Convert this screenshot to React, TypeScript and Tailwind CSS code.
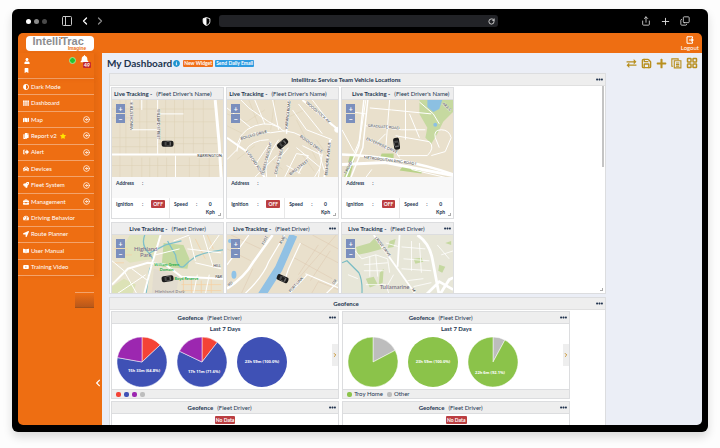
import type {ReactNode} from 'react';
import {ChevronLeft, ChevronRight, CircleArrowRight, Copy, LayoutGrid, PanelLeft, Plus, RotateCw, Save, Share} from 'lucide-react';
import {
  FaAdjust,
  FaBell,
  FaBookOpen,
  FaBookmark,
  FaBriefcase,
  FaCar,
  FaChevronLeft,
  FaCopy,
  FaEllipsisH,
  FaInfoCircle,
  FaLocationArrow,
  FaMap,
  FaPlus,
  FaRocket,
  FaSignOutAlt,
  FaStar,
  FaTachometerAlt,
  FaTh,
  FaUser,
  FaYoutube,
} from 'react-icons/fa';

const NAV = [
  {label: 'Dark Mode', icon: FaAdjust},
  {label: 'Dashboard', icon: FaTh},
  {label: 'Map', icon: FaMap, more: true},
  {label: 'Report v2', icon: FaCopy, more: true, star: true},
  {label: 'Alert', icon: FaSignOutAlt, more: true},
  {label: 'Devices', icon: FaCar, more: true},
  {label: 'Fleet System', icon: FaRocket, more: true},
  {label: 'Management', icon: FaBriefcase, more: true},
  {label: 'Driving Behavior', icon: FaTachometerAlt},
  {label: 'Route Planner', icon: FaLocationArrow},
  {label: 'User Manual', icon: FaBookOpen},
  {label: 'Training Video', icon: FaYoutube},
];

function BrowserBar() {
  return (
    <div className="flex h-6 shrink-0 items-center text-white">
      <div className="flex w-[184px] shrink-0 items-center pl-2">
        <span className="size-[5px] rounded-full bg-white" />
        <span className="ml-[3px] size-[5px] rounded-full bg-[#8a8a8a]" />
        <span className="ml-[3px] size-[5px] rounded-full bg-[#4a4a4a]" />
        <PanelLeft className="ml-[14px] size-3 text-[#c8c8c8]" strokeWidth={2} />
        <ChevronLeft className="ml-1.5 size-3" strokeWidth={2.5} />
        <ChevronRight className="ml-[3px] size-3 text-[#8a8a8a]" strokeWidth={2.5} />
      </div>
      <svg viewBox="0 0 16 16" className="mr-2 size-[9px] shrink-0">
        <path d="M8 1l6 2v5c0 4-3 6-6 7-3-1-6-3-6-7V3z" fill="none" stroke="white" strokeWidth="1.6" />
        <path d="M8 1L2 3v5c0 4 3 6 6 7z" fill="white" />
      </svg>
      <div className="flex h-3 flex-1 items-center justify-end rounded-[3px] bg-[#222327] pr-[3px]">
        <RotateCw className="size-[7px] text-[#e0e0e0]" strokeWidth={3} />
      </div>
      <div className="flex w-[204px] shrink-0 items-center justify-end gap-[9px] pr-3 text-[#dedede]">
        <Share className="size-[10px]" strokeWidth={2} />
        <Plus className="size-[11px]" strokeWidth={2} />
        <Copy className="size-[10px] -scale-y-100" strokeWidth={2} />
      </div>
    </div>
  );
}

function TopBar() {
  return (
    <header className="flex h-5 shrink-0 items-center justify-between bg-[#ee6e12] pl-2 pr-[3px]">
      <svg viewBox="0 0 68 15" className="h-[15px] w-[68px]" fontFamily="Liberation Sans, sans-serif" fontWeight="bold">
        <rect width="68" height="15" rx="4" fill="white" />
        <text x="6.500" y="9.300" fontSize="11" fill="#8d8d8f">
          IntelliTrac
        </text>
        <text x="42" y="14" fontSize="4.800" fill="#ee6e12">
          Imagine
        </text>
        <circle cx="35.500" cy="2.200" r="0.900" fill="#ee6e12" />
      </svg>
      <button type="button" className="flex flex-col items-center text-[6px] leading-[7px] text-white">
        <svg viewBox="0 0 16 16" className="size-2" fill="none" stroke="currentColor" strokeWidth="2">
          <path d="M13 5V1.500H2v13h11V11" />
          <path d="M6 8h8M11 5l3 3-3 3" strokeWidth="2.400" />
        </svg>
        Logout
      </button>
    </header>
  );
}

function Sidebar() {
  return (
    <aside className="relative w-[84px] shrink-0 bg-[#ee6e12] text-[6px] text-white">
      <div className="mr-2 flex h-[26px] border-b border-[#f3a36b] shadow-[3px_0_4px_rgba(160,60,0,0.12)]">
        <div className="ml-1.5 flex flex-col gap-1 pt-[5px]">
          <FaUser className="size-[6px]" />
          <FaBookmark className="size-[5px]" />
        </div>
        <div className="ml-auto flex pt-1">
          <span className="size-[7px] rounded-full border border-[#a5e59b] bg-[#23c430]" />
          <div className="relative ml-1 mr-0.5 w-3">
            <FaBell className="-mt-0.5 size-[9px]" />
            <span className="absolute left-[3px] top-[5px] rounded-[1px] bg-[#c3282f] px-px text-[5px] font-bold leading-[6px]">49</span>
          </div>
        </div>
      </div>
      <nav className="mr-2 grid h-[197px] auto-rows-fr shadow-[3px_0_4px_rgba(160,60,0,0.12)]">
        {NAV.map(({label, icon: Icon, more, star}) => (
          <a key={label} href="#" className="flex items-center border-b border-[#f3a36b] pl-[5px] pr-1">
            <Icon className="mr-0.5 size-[6px]" />
            {label}
            {star && <FaStar className="ml-[3px] size-[6px] text-[#ffe500]" />}
            {more && <CircleArrowRight className="ml-auto size-[7px]" strokeWidth={2.5} />}
          </a>
        ))}
      </nav>
      <div className="ml-[57px] mr-2 mt-4 h-4 border-t border-[#f3a36b] border-b border-b-[#a0501a] bg-linear-to-b from-[#ee6e12] to-[#b8581a]" />
      <button type="button" aria-label="Collapse menu" className="absolute bottom-[38px] right-0">
        <FaChevronLeft className="size-[8px]" />
      </button>
    </aside>
  );
}

function Dots() {
  return (
    <button type="button" aria-label="More" className="shrink-0 px-0.5">
      <FaEllipsisH className="size-[7px]" />
    </button>
  );
}

function Panel({title, className, children}: {title: string; className?: string; children: ReactNode}) {
  return (
    <section className={`relative shrink-0 border border-[#dcdddf] bg-white ${className ?? ''}`}>
      <div className="flex h-3 items-center border-b border-[#e0e0e0] bg-[#eeeeee]">
        <h2 className="flex-1 pr-3 text-center text-[6px] font-bold">{title}</h2>
        <Dots />
      </div>
      {children}
    </section>
  );
}

function CarMarker({x, y, rotate}: {x: number; y: number; rotate: number}) {
  return (
    <g transform={`translate(${x} ${y}) rotate(${rotate})`}>
      <rect x="-6" y="-3" width="12" height="6" rx="2" fill="#1c1c1c" />
      <rect x="-3" y="-2" width="2" height="4" fill="#4a4a4a" />
      <rect x="2" y="-2" width="1.500" height="4" fill="#6a6a6a" />
      <path d="M-1-2.200h3M-1 2.200h3" stroke="#777" strokeWidth="0.600" />
    </g>
  );
}

function RoadName({x, y, rotate = 0, children}: {x: number; y: number; rotate?: number; children: string}) {
  return (
    <text transform={`translate(${x} ${y}) rotate(${rotate})`} fontSize="3.800" fontWeight="500" fill="#444444" stroke="#fff" strokeWidth="0.500" paintOrder="stroke">
      {children}
    </text>
  );
}

function MapFrame({height, land = '#e9e0cc', children}: {height: number; land?: string; children: ReactNode}) {
  return (
    <div className="relative">
      <svg viewBox={`0 0 112 ${height}`} className="block w-full" fill="none" stroke="white" fontFamily="Lato, sans-serif">
        <rect width="112" height={height} fill={land} stroke="none" />
        {children}
      </svg>
      <div className="absolute left-1 top-1 flex flex-col gap-px">
        <button type="button" className="size-[9px] bg-[#7b8fbd] text-[7px] font-bold leading-[8px] text-white">
          +
        </button>
        <button type="button" className="size-[9px] bg-[#7b8fbd] text-[7px] font-bold leading-[8px] text-white">
          −
        </button>
      </div>
    </div>
  );
}

function WellardMap() {
  return (
    <MapFrame height={78}>
      <g stroke="#ddd0b5" strokeWidth="0.500">
        <path d="M0 9h104M0 18h20M20 22h86M0 38h107M46 44h60M0 66h112M0 47h46" />
        <path d="M8 0v78M14 0v54M28 0v54M35 0v54M54 0v54M63 0v54M72 0v54M82 0v54M92 0v54M20 58v20M30 58v20M38 58v20M46 58v20M55 58v20M78 58v20M88 58v20M98 58v20" />
      </g>
      <path d="M20 0v30h26M46 0v55M46 14h26M64 56v22M30 0v10" strokeWidth="1" />
      <path d="M0 55h112" strokeWidth="2" />
      <path d="M104 0l4 44 2 34" strokeWidth="3" />
      <g stroke="none">
        <RoadName x={21} y={30} rotate={-90}>
          WINCHESTER R
        </RoadName>
        <RoadName x={45} y={9} rotate={90}>
          WILLARD STREET
        </RoadName>
        <RoadName x={86} y={57}>
          BARRINGTON
        </RoadName>
        <CarMarker x={56} y={44} rotate={0} />
      </g>
    </MapFrame>
  );
}

function BololoMap() {
  return (
    <MapFrame height={78}>
      <g stroke="#ddd0b5" strokeWidth="0.500">
        <path d="M0 14l20 8 18-12M22 0l10 26M48 0l-4 30M70 20l20 40M90 40l14 20M10 60l18-14M44 60l12 10M72 50l16 22M60 18l18-8M0 26l16 8" />
      </g>
      <path d="M14 0l8 8 20 14 12 6M0 8l24 20M28 0l10 24M66 10l14 20 26 10M72 4l24 30M86 0l20 26M46 0l6 30M0 60l10-10 4-10q12-10 30-7l14-2q20 2 34 20l6 20" strokeWidth="1" />
      <path d="M10 52q0-20 18-26t30 6M18 52q6-12 24-12M28 66l16-24M40 78q-4-16 12-38M50 78q-4-14 12-30M58 78l12-24 12 2-10 18M70 48l24 20-6 10M50 56l-22 22M60 66l14 8M96 56l-20-10M92 78l4-24" strokeWidth="1" />
      <path d="M60 34l2-34" strokeWidth="1.500" />
      <path d="M0 38l20 14 18 26M76 0l36 30M104 40l-6 38" strokeWidth="2" />
      <circle cx="111" cy="30" r="2.500" fill="white" />
      <g stroke="none">
        <RoadName x={14} y={40} rotate={-15}>
          BOLOLO DRIVE
        </RoadName>
        <RoadName x={61} y={29} rotate={-84}>
          KARANGI ROAD
        </RoadName>
        <RoadName x={79} y={3} rotate={41}>
          WOODSTOCK AV
        </RoadName>
        <RoadName x={73} y={37} rotate={36}>
          BOLOLO DRIVE
        </RoadName>
        <RoadName x={19} y={52} rotate={56}>
          LUSFORD ROAD
        </RoadName>
        <RoadName x={37} y={76} rotate={-76}>
          TORRES CRESCENT
        </RoadName>
        <RoadName x={50} y={75} rotate={-76}>
          DORSET STREET
        </RoadName>
        <RoadName x={64} y={76} rotate={-38}>
          BIRD STREET
        </RoadName>
        <RoadName x={101} y={76} rotate={-84}>
          BELMORE AVENUE
        </RoadName>
        <CarMarker x={56} y={44} rotate={-40} />
      </g>
    </MapFrame>
  );
}

function RingRoadMap() {
  return (
    <MapFrame height={78}>
      <g stroke="none">
        <path d="M78 0h34v12l-10 10-6 12-6 10-6-6 2-10-8-14z" fill="#c6d9a0" />
        <path d="M86 0h15l-3 9-6 3-6-5z" fill="#8cc0e2" />
        <path d="M40 54h12v5H38zM62 66l20 3-2 5-22-3zM8 56l6-2-6 24H2z" fill="#b9d289" />
        <ellipse cx="94" cy="25" rx="2" ry="2" fill="#8cc0e2" />
      </g>
      <path d="M28 8l22 2 40 4M48 0l-4 50M64 0v40M24 26l36 4 24 0M24 40l30 12 4 6M54 36l34 6q6 6-2 14H56M34 44l10-10M68 14l10 24M10 12l14 2M98 48l-4-10q-2-8 6-8t10 8l-6 14-14 4M78 2l14 12 6 10" strokeWidth="1" />
      <path d="M24 0l-6 40-6 14M0 30l12 22M70 70l34 8M30 70l-6 8" strokeWidth="1" />
      <path d="M22 0l-5 46L4 78M26 0l-5 48L9 78" strokeWidth="1.500" />
      <path d="M0 55q60 2 112 20" strokeWidth="2.500" />
      <path d="M0 65l44-2 68 13" strokeWidth="3" />
      <g stroke="none">
        <RoadName x={26} y={27} rotate={5}>
          GRADUATE ROAD
        </RoadName>
        <RoadName x={24} y={40} rotate={24}>
          ENTERPRISE DRIVE
        </RoadName>
        <RoadName x={22} y={59} rotate={7}>
          METROPOLITAN RING ROAD I
        </RoadName>
        <RoadName x={4} y={75} rotate={-62}>
          T ROAD
        </RoadName>
        <RoadName x={101} y={4} rotate={44}>
          ARA C
        </RoadName>
        <CarMarker x={55} y={44} rotate={82} />
      </g>
    </MapFrame>
  );
}

function HighlandMap() {
  return (
    <MapFrame height={61} land="#e9e3cf">
      <g stroke="none">
        <path d="M18 0h30l-6 24-24 4-12-8z" fill="#dfe3bd" />
        <path d="M52 8l20 2 6 14-2 10-26-2z" fill="#c4d9a0" />
        <path d="M0 52l12-8 12 6-4 11H0z" fill="#dce2b6" />
        <path d="M42 34l26 6-4 21H40z" fill="#e2dccf" />
      </g>
      <g stroke="#f6cf9f" strokeWidth="0.700">
        <path d="M72 44v16M80 44v16M90 46v14M100 44v16M70 50h40M70 56h40M84 4l10 20M96 0l6 14M2 14h14M6 20h14M2 28h10" />
      </g>
      <path d="M33 0q-4 10 4 18t1 16l-4 27M56 6l8 14q2 14 8 12 6-6 12-10t28-7M38 18l16 -8 16-4" stroke="#7fc0c9" strokeWidth="1.300" />
      <path d="M62 6l16-6M78 2l6 24M76 14l34 4M84 28l26 6M92 0l10 32M86 40l-4 20M98 40l-4 20M0 26l12 10 14 25M20 34l16 12M44 20l24 -6M4 60l30-20M108 0l-10 14" strokeWidth="1" />
      <path d="M0 50l16-16 20-6 18 2 16 12 42 2M49 0l-9 30-8 31" strokeWidth="2" />
      <g stroke="none">
        <g fontSize="6" textAnchor="middle" fill="#75648a">
          <text x="34" y="16">
            Highland
          </text>
          <text x="34" y="22">
            Park
          </text>
        </g>
        <g fontSize="4" fontWeight="bold" textAnchor="middle" fill="#1fae4b">
          <text x="55" y="31">
            William Green
          </text>
          <text x="55" y="36">
            Domain
          </text>
          <text x="75" y="45">
            Boyd Reserve
          </text>
        </g>
        <text x="43" y="59" fontSize="5" fill="#8b8794">
          Highland Park
        </text>
        <RoadName x={102} y={32}>
          HILL
        </RoadName>
        <RoadName x={104} y={43}>
          PAR
        </RoadName>
        <CarMarker x={56} y={44} rotate={-8} />
      </g>
    </MapFrame>
  );
}

function RiverMap() {
  return (
    <MapFrame height={61}>
      <g stroke="#dcc7ae" strokeWidth="0.500">
        <path d="M0 14l24 12M4 0l30 14M66 22l40 22M74 8l38 20M86 0l26 14M92 10L72 40M104 16L84 46M14 60l12-26M84 61l8-14 20 8" />
        <path d="M110 0L70 46" />
      </g>
      <path d="M67 0L52 34 34 62" stroke="#91c1e4" strokeWidth="8" />
      <path d="M56 0l6 6-2 5" stroke="#91c1e4" strokeWidth="1" />
      <ellipse cx="7" cy="40" rx="2.500" ry="4" fill="#8fc3e8" stroke="none" />
      <circle cx="3" cy="6" r="2" fill="#8fc3e8" stroke="none" />
      <path d="M58 0L42 27q-6 16-26 34M74 8L62 34l-4 12M81 40L61 61M79 39l33 14M98 61l14-14M22 0L0 30" strokeWidth="1.200" />
      <path d="M46 0L26 28Q18 42 0 54" strokeWidth="2.500" />
      <g stroke="none">
        <RoadName x={37} y={10} rotate={-62}>
          FUST
        </RoadName>
        <RoadName x={55} y={9} rotate={-62}>
          RUB
        </RoadName>
        <RoadName x={64} y={58} rotate={-48}>
          PORT LINK
        </RoadName>
        <RoadName x={2} y={52} rotate={-40}>
          RD
        </RoadName>
        <RoadName x={108} y={50} rotate={-60}>
          DR
        </RoadName>
        <CarMarker x={56} y={44} rotate={24} />
      </g>
    </MapFrame>
  );
}

function TullamarineMap() {
  return (
    <MapFrame height={61} land="#e7e6d8">
      <g stroke="none" fill="#c5d8a0">
        <path d="M14 12l14-4 6-6 6 12-14 4-10 2zM48 6l6-2-2 8-6 1zM72 24l8-1 2 4-8 2zM38 38l4-4-1 14-4 2zM24 44l8-2 4 8-8 3zM98 30l6 2-3 6-4-2zM104 8l6-2v4z" />
      </g>
      <path d="M0 28l5-2 12 12q4 8 3 23" stroke="#79bcc4" strokeWidth="1.200" />
      <path d="M20 24l14-4 12 4 2 14M22 30l24-2M22 36l20 0M28 22v20M34 20l2 22M44 8l14 4M60 12l24 2M62 24l26 2M60 34l30 2M70 6v30M78 8l2 30M52 40l-8 14M66 46l16-2M72 52l18-4M100 20l12-4M96 10l12 14M24 50h20l4 11M8 10l12 14M6 40l10 4" strokeWidth="0.800" />
      <path d="M58 0l-2 32M32 0l43 61" strokeWidth="1.800" />
      <path d="M76 0q12 8 15 24l7 37M98 61l10-16 4-2M84 61l14-14 14 8" strokeWidth="2.800" />
      <g stroke="none">
        <RoadName x={33} y={3} rotate={53}>
          LROSE DRIVE
        </RoadName>
        <text x="53" y="54" fontSize="6" textAnchor="middle" fill="#6b6478">
          Tullamarine
        </text>
        <RoadName x={70} y={55} rotate={53}>
          M
        </RoadName>
      </g>
    </MapFrame>
  );
}

const TRACKING = [
  {driver: "(Fleet Driver's Name)", map: WellardMap, title: 'pl-0.5', details: true},
  {driver: "(Fleet Driver's Name)", map: BololoMap, title: 'pl-0.5', details: true},
  {driver: "(Fleet Driver's Name)", map: RingRoadMap, title: 'justify-end pr-1', details: true},
  {driver: '(Fleet Driver)', map: HighlandMap, title: 'justify-center'},
  {driver: '(Fleet Driver)', map: RiverMap, title: 'justify-center pr-3', dots: true},
  {driver: '(Fleet Driver)', map: TullamarineMap, title: 'justify-center pr-3', dots: true},
];

function TrackingCard({driver, map: Map, title, details, dots}: (typeof TRACKING)[number]) {
  return (
    <article className="overflow-hidden border border-[#dcdddf]">
      <div className="flex h-3 items-center border-b border-[#dcdddf] bg-[#eeeeee]">
        <h3 className={`flex flex-1 gap-1 whitespace-nowrap text-[6px] font-bold ${title}`}>
          Live Tracking - <span className="font-normal">{driver}</span>
        </h3>
        {dots && <Dots />}
      </div>
      <Map />
      {details && (
        <div className="text-[5px] font-bold leading-[8px]">
          <div className="flex h-[21px] bg-[#f8f8f8] pl-1 pt-0.5">
            <span className="w-[26px]">Address</span>:
          </div>
          <div className="flex h-5">
            <div className="flex w-[58px] items-start border-r border-[#e8e8e8] pl-1 pt-[2px]">
              <span className="w-[26px]">Ignition</span>:
              <span className="ml-2 rounded-[1px] bg-[#bb3e41] px-0.5 text-white">OFF</span>
            </div>
            <div className="relative flex flex-1 pl-1 pt-[2px]">
              <span className="w-[22px]">Speed</span>:
              <span className="ml-2 w-[10px] text-center">
                0<br />
                Kph
              </span>
              <span className="absolute bottom-0.5 right-0.5 size-[3px] border-b border-r border-[#aaaaaa]" />
            </div>
          </div>
        </div>
      )}
    </article>
  );
}

type Slice = {to: number; color: string};

function arc(from: number, to: number) {
  const point = (t: number) => `${25 + 25 * Math.sin(t * 2 * Math.PI)} ${25 - 25 * Math.cos(t * 2 * Math.PI)}`;
  return `M25 25L${point(from)}A25 25 0 ${to - from > 0.5 ? 1 : 0} 1 ${point(to)}Z`;
}

function Pie({slices, label, x = 25, y = 26}: {slices: Slice[]; label?: string; x?: number; y?: number}) {
  return (
    <svg viewBox="0 0 50 50" className="size-[50px]" fontFamily="Open Sans, sans-serif">
      {slices.length === 1 ? (
        <circle cx="25" cy="25" r="25" fill={slices[0].color} />
      ) : (
        slices.map((s, i) => <path key={s.to} d={arc(i ? slices[i - 1].to : 0, s.to)} fill={s.color} stroke="white" strokeWidth="0.500" />)
      )}
      {label && (
        <text x={x} y={y} fontSize="4" fontWeight="bold" textAnchor="middle" fill="white">
          {label}
        </text>
      )}
    </svg>
  );
}

const RED = '#f44336';
const BLUE = '#3f51b5';
const PURPLE = '#9c27b0';
const GREY = '#bdbdbd';
const GREEN = '#8bc34a';

function GeofenceHeader({className}: {className: string}) {
  return (
    <div className="flex h-3 items-center border-b border-[#dcdddf] bg-[#eeeeee]">
      <h3 className={`flex flex-1 justify-center gap-1 text-[6px] font-bold ${className}`}>
        Geofence <span className="font-normal">(Fleet Driver)</span>
      </h3>
      <Dots />
    </div>
  );
}

function GeofenceCard({legend, children}: {legend: {name?: string; color: string}[]; children: ReactNode}) {
  return (
    <article className="border border-[#dcdddf]">
      <GeofenceHeader className="pr-5" />
      <div className="relative h-[65px]">
        <p className="pt-px text-center text-[6px] font-bold leading-[8px]">Last 7 Days</p>
        <div className="flex gap-[10px] pl-[5px] pt-[4px]">{children}</div>
        <button type="button" aria-label="Next" className="absolute right-0 top-5 flex h-[22px] w-[6px] items-center justify-center bg-[#eeeeee] text-[#c8932e]">
          <ChevronRight className="size-[6px]" strokeWidth={4} />
        </button>
      </div>
      <ul className="flex h-[9px] items-center gap-[3px] border-t border-[#dcdddf] bg-[#eeeeee] pl-1 text-[6px] leading-[8px]">
        {legend.map(({name, color}) => (
          <li key={color} className="flex items-center gap-0.5">
            <span className="size-[5px] rounded-[2px]" style={{backgroundColor: color}} />
            {name && <span className="pr-px">{name}</span>}
          </li>
        ))}
      </ul>
    </article>
  );
}

function EmptyGeofenceCard() {
  return (
    <article className="border border-[#dcdddf] text-center">
      <GeofenceHeader className="pr-0" />
      <span className="mt-0.5 inline-block rounded-[1px] bg-[#bb3e41] px-px align-top text-[5px] font-bold leading-[8px] text-white">No Data</span>
      <div className="h-16" />
    </article>
  );
}

function Toolbar() {
  return (
    <div className="flex items-center gap-[4px] text-[#b88f1f]">
      <button type="button" aria-label="Swap">
        <svg viewBox="0 0 20 20" className="size-[11px]" fill="none" stroke="currentColor" strokeWidth="2.500">
          <path d="M1 7h15M19 13H4" />
          <path d="M14 2l5 5-5 5zM6 8l-5 5 5 5z" fill="currentColor" stroke="none" />
        </svg>
      </button>
      <button type="button" aria-label="Save">
        <Save className="size-[11px]" strokeWidth={3} />
      </button>
      <button type="button" aria-label="Add">
        <FaPlus className="size-[11px]" />
      </button>
      <button type="button" aria-label="Duplicate">
        <svg viewBox="0 0 20 20" className="size-[11px]" fill="none" stroke="currentColor" strokeWidth="2">
          <path d="M4 15H1.500V1.500H13V4" />
          <path d="M6 5h12v13H6zM9 9h6M9 12h6M9 15h6" />
        </svg>
      </button>
      <button type="button" aria-label="Layout">
        <LayoutGrid className="size-3" strokeWidth={3} />
      </button>
    </div>
  );
}

function Dashboard() {
  return (
    <main className="flex min-w-0 flex-1 flex-col overflow-hidden bg-[#ebeef6] pl-[5px] pr-1 text-[#22344f]">
      <div className="flex h-5 shrink-0 items-center">
        <h1 className="text-[10px] font-bold">My Dashboard</h1>
        <FaInfoCircle className="ml-px size-[7px] text-[#1f94cf]" />
        <button type="button" className="ml-[3px] rounded-[1px] bg-[#f0701a] px-px text-[5px] font-bold leading-[7px] text-white">
          New Widget
        </button>
        <button type="button" className="ml-0.5 rounded-[1px] bg-[#2d9be0] px-px text-[5px] font-bold leading-[7px] text-white">
          Send Daily Email
        </button>
        <div className="ml-auto">
          <Toolbar />
        </div>
      </div>

      <div className="ml-0.5 mr-[92px] flex min-h-0 flex-1 flex-col gap-[3px]">
        <Panel title="Intellitrac Service Team Vehicle Locations" className="h-[221px] overflow-hidden">
          <div className="grid w-[70%] grid-cols-3 gap-x-0.5 gap-y-[3px] pl-px pr-0.5 pt-px">
            {TRACKING.map((card, i) => (
              <TrackingCard key={i} {...card} />
            ))}
          </div>
          <span className="absolute right-px top-3 h-[81px] w-[2px] bg-[#c4c4c4]" />
          <span className="absolute bottom-0.5 right-0.5 size-[3px] border-b border-r border-[#aaaaaa]" />
        </Panel>

        <Panel title="Geofence">
          <div className="grid w-[93%] grid-cols-2 gap-x-[3px] gap-y-0.5 pl-px pt-px">
            <GeofenceCard legend={[{color: RED}, {color: BLUE}, {color: PURPLE}, {color: GREY}]}>
              <Pie slices={[{to: 0.13, color: RED}, {to: 0.778, color: BLUE}, {to: 1, color: PURPLE}]} label="15h 33m (64.8%)" x={27} y={35} />
              <Pie slices={[{to: 0.105, color: RED}, {to: 0.821, color: BLUE}, {to: 1, color: PURPLE}]} label="17h 11m (71.6%)" x={27} y={36} />
              <Pie slices={[{to: 1, color: BLUE}]} label="23h 59m (100.0%)" />
            </GeofenceCard>
            <GeofenceCard
              legend={[
                {name: 'Troy Home', color: GREEN},
                {name: 'Other', color: GREY},
              ]}
            >
              <Pie slices={[{to: 0.173, color: GREY}, {to: 1, color: GREEN}]} />
              <Pie slices={[{to: 1, color: GREEN}]} label="23h 59m (100.0%)" />
              <Pie slices={[{to: 0.079, color: GREY}, {to: 1, color: GREEN}]} label="22h 6m (92.1%)" x={22} y={37} />
            </GeofenceCard>
            <EmptyGeofenceCard />
            <EmptyGeofenceCard />
          </div>
        </Panel>
      </div>
    </main>
  );
}

export default function App() {
  return (
    <div className="flex h-screen flex-col bg-[#fdfdfd] px-3 pb-4 pt-[9px] font-['Lato',sans-serif] leading-none">
      <div className="flex min-h-0 flex-1 flex-col rounded-[6px] bg-black px-1.5 pb-[7px] shadow-[0_5px_10px_rgba(0,0,0,0.14)]">
        <BrowserBar />
        <div className="flex min-h-0 flex-1 flex-col overflow-hidden rounded-[5px]">
          <TopBar />
          <div className="flex min-h-0 flex-1">
            <Sidebar />
            <Dashboard />
          </div>
        </div>
      </div>
    </div>
  );
}
